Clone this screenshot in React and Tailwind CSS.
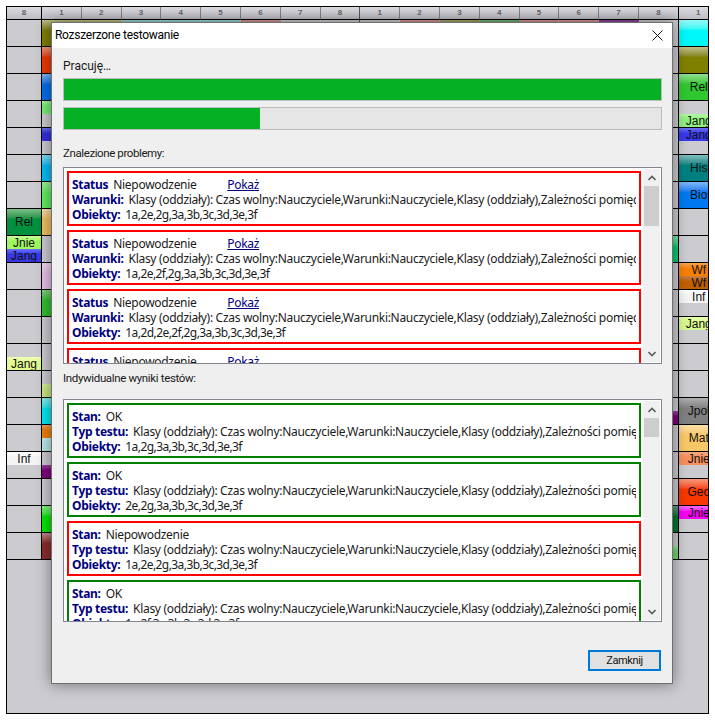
const sans = "font-['Noto_Sans',sans-serif]";
const narrow = "font-['Roboto',sans-serif]";

const olive = "from-[#c2c28a] to-[#808000]";
const teal = "from-[#a6dada] to-[#20a0a0]";
const rose = "from-[#d89a9a] to-[#c04040]";
const plum = "from-[#8a4a9a] to-[#600080]";
const sage = "from-[#78b878] to-[#208020]";
const moss = "from-[#a8a868] to-[#808000]";

const full = (bg, t) => [{ pos: "full", bg, t }];
const top = (bg, t) => ({ pos: "top", bg, t });
const bottom = (bg, t) => ({ pos: "bottom", bg, t });

const slotPos = {
  full: "h-full",
  top: "h-[13px]",
  bottom: "h-[13px] mt-auto",
};

const columns = [
  {
    head: "8",
    width: "w-[35px]",
    line: "border-r-black",
    cells: {
      7: full("from-[#7cc08c] to-[#009040]", "Rel"),
      8: [top("from-[#c8ff98] to-[#a0f860]", "Jnie"), bottom("from-[#7070f8] to-[#3838e8]", "Jang")],
      12: [bottom("from-[#f2ffb4] to-[#e0fa90]", "Jang")],
      16: [top("from-[#ffffff] to-[#f4f4f4]", "Inf")],
    },
  },
  {
    head: "1",
    cells: {
      0: full(olive),
      1: full("from-[#f09878] to-[#f03800]"),
      2: full("from-[#80b8f0] to-[#0070f0]"),
      3: [top("from-[#a0f8a0] to-[#78f078]")],
      4: [top("from-[#7070f0] to-[#3030e0]")],
      5: full("from-[#80e0f8] to-[#00c0f8]"),
      6: full("from-[#a0f0a0] to-[#60f060]"),
      7: full("from-[#f8e0b0] to-[#f0c060]"),
      9: full("from-[#f4dcf0] to-[#e8c0e8]"),
      10: full("from-[#80d080] to-[#30c030]"),
      13: [bottom("from-[#d8f0a0] to-[#c8e880]")],
      14: full("from-[#80f0f0] to-[#00e8f0]"),
      15: [top("from-[#f0a050] to-[#f08000]"), bottom("from-[#c8f0f0] to-[#b8e8e8]")],
      16: [bottom("from-[#a040a0] to-[#800080]")],
      18: full("from-[#80f880] to-[#00e800]"),
      19: full("from-[#c09090] to-[#8c2c2c]"),
    },
  },
  { head: "2", cells: { 0: full(olive) } },
  { head: "3", cells: { 0: full(teal) } },
  { head: "4", cells: { 0: full(teal) } },
  { head: "5", cells: { 0: full(teal) } },
  { head: "6", cells: { 0: full(rose) } },
  { head: "7", cells: {} },
  { head: "8", line: "border-r-[#555555]", cells: {} },
  { head: "1", cells: {} },
  { head: "2", cells: { 0: full(rose) } },
  { head: "3", cells: { 0: full(moss) } },
  { head: "4", cells: { 0: full(sage) } },
  { head: "5", cells: { 0: full(rose) } },
  { head: "6", cells: { 0: full(rose) } },
  { head: "7", cells: { 0: full(plum) } },
  {
    head: "8",
    line: "border-r-black",
    cells: {
      8: full("from-[#80e8b0] to-[#00d070]"),
      14: [bottom("from-[#a040a0] to-[#800080]")],
      18: full("from-[#60a080] to-[#007830]"),
      19: [bottom("from-[#a0e8a0] to-[#70d870]")],
    },
  },
  {
    head: "1",
    width: "w-[40px]",
    cells: {
      0: full("from-[#90f8f8] to-[#00f8f8]"),
      1: full("from-[#c2c28a] to-[#808000]"),
      2: full("from-[#90e090] to-[#30c830]", "Rel"),
      3: [bottom("from-[#b0f8a0] to-[#90f080]", "Jang")],
      4: [top("from-[#7070f8] to-[#3838f0]", "Jang")],
      5: full("from-[#80c0c0] to-[#008080]", "His"),
      6: full("from-[#80b8f8] to-[#0078f0]", "Bio"),
      9: [top("from-[#f8a850] to-[#f88000]", "Wf"), bottom("from-[#c88040] to-[#c06000]", "Wf")],
      10: [top("from-[#ffffff] to-[#f4f4f4]", "Inf")],
      11: [top("from-[#e8ffa8] to-[#d8f890]", "Jang")],
      14: full("from-[#b0b0b0] to-[#808080]", "Jpol"),
      15: full("from-[#fce0a8] to-[#f8c868]", "Mat"),
      16: [top("from-[#f8a880] to-[#f89060]", "Jnie")],
      17: full("from-[#f89878] to-[#f83800]", "Geo"),
      18: [top("from-[#f868f8] to-[#f800f8]", "Jnie")],
    },
  },
];

const rows = Array.from({ length: 20 }, (_, i) => i);

function Cell({ slots }) {
  return (
    <div className="flex h-[27px] flex-col border-b border-black">
      {slots?.map((slot) => (
        <div
          key={slot.pos}
          className={`flex items-center justify-center overflow-hidden whitespace-nowrap bg-linear-to-b to-40% text-[12px] leading-none text-[#111111] ${slotPos[slot.pos]} ${slot.bg}`}
        >
          {slot.t}
        </div>
      ))}
    </div>
  );
}

function Timetable() {
  return (
    <div className="flex h-[708px] w-[703px] overflow-hidden border border-black bg-[#cbcbd0] font-['Liberation_Sans',sans-serif]">
      {columns.map((col, i) => (
        <div key={i} className={`shrink-0 ${col.width ?? "w-[39.8px]"}`}>
          <div
            className={`flex h-[13px] items-center justify-center border-b border-r border-b-black bg-linear-to-b from-[#dcdce0] to-[#bcbcc2] text-[8px] font-bold leading-none text-[#666666] ${col.line ?? "border-r-[#808084]"}`}
          >
            {col.head}
          </div>
          <div className={col.line ? `border-r ${col.line}` : ""}>
            {rows.map((r) => (
              <Cell key={r} slots={col.cells[r]} />
            ))}
          </div>
        </div>
      ))}
    </div>
  );
}

function Chevron({ up }) {
  return (
    <svg width="8" height="6" viewBox="0 0 8 6" fill="none" stroke="#606060" strokeWidth="1.6">
      <polyline points={up ? "0.5,5 4,1.5 7.5,5" : "0.5,1 4,4.5 7.5,1"} />
    </svg>
  );
}

function Scrollbar({ thumb }) {
  return (
    <div className="my-[1px] mr-[1px] flex w-[17px] shrink-0 flex-col items-center bg-[#f0f0f0]">
      <div className="flex h-[17px] shrink-0 items-center justify-center">
        <Chevron up />
      </div>
      <div className={`w-[15px] bg-[#cdcdcd] ${thumb}`} />
      <div className="mt-auto flex h-[17px] shrink-0 items-center justify-center">
        <Chevron />
      </div>
    </div>
  );
}

function Label({ children }) {
  return <span className="mr-[5px] font-bold text-[#000080]">{children}</span>;
}

function ResultCard({ ok, first, firstValue, second, third, link }) {
  return (
    <div
      className={`h-[55px] shrink-0 overflow-hidden border-2 bg-white px-[3px] py-[4px] tracking-[-0.3px] ${sans} ${ok ? "border-[#008000]" : "border-[#ff0000]"}`}
    >
      <div className="flex h-[15px] items-center whitespace-nowrap">
        <Label>{first}</Label>
        <span className={link ? "w-[114px]" : ""}>{firstValue}</span>
        {link && <a className="text-[#000080] underline">Pokaż</a>}
      </div>
      <div className="flex h-[15px] items-center overflow-hidden whitespace-nowrap">
        <Label>{second}</Label>
        <span>Klasy (oddziały): Czas wolny:Nauczyciele,Warunki:Nauczyciele,Klasy (oddziały),Zależności pomiędzy lekcjami</span>
      </div>
      <div className="flex h-[15px] items-center whitespace-nowrap">
        <Label>Obiekty:</Label>
        <span className="tracking-[-0.57px]">{third}</span>
      </div>
    </div>
  );
}

const problems = [
  "1a,2e,2g,3a,3b,3c,3d,3e,3f",
  "1a,2e,2f,2g,3a,3b,3c,3d,3e,3f",
  "1a,2d,2e,2f,2g,3a,3b,3c,3d,3e,3f",
  "1a,2e,2g,3a,3b,3c,3d,3e,3f",
];

const results = [
  { ok: true, value: "OK", objects: "1a,2g,3a,3b,3c,3d,3e,3f" },
  { ok: true, value: "OK", objects: "2e,2g,3a,3b,3c,3d,3e,3f" },
  { ok: false, value: "Niepowodzenie", objects: "1a,2e,2g,3a,3b,3c,3d,3e,3f" },
  { ok: true, value: "OK", objects: "1a,2f,3a,3b,3c,3d,3e,3f" },
];

function ProgressBar({ fill }) {
  return (
    <div className="h-[23px] border border-[#bcbcbc] bg-[#e6e6e6]">
      <div className={`h-full bg-[#06b025] ${fill}`} />
    </div>
  );
}

function Dialog() {
  return (
    <div
      className={`absolute left-[51px] top-[22px] flex h-[662px] w-[622px] flex-col border border-[#707070] bg-[#efefef] text-[12px] leading-[15px] text-[#1a1a1a] shadow-[0_0_14px_rgba(0,0,0,0.45)] ${narrow}`}
    >
      <div className="flex h-[25px] shrink-0 items-center justify-between bg-white pl-[3px] pr-[9px] tracking-[-0.27px] text-[#000000]">
        <span>Rozszerzone testowanie</span>
        <svg width="11" height="11" viewBox="0 0 11 11" stroke="#111111" strokeWidth="1">
          <line x1="0.5" y1="0.5" x2="10.5" y2="10.5" />
          <line x1="10.5" y1="0.5" x2="0.5" y2="10.5" />
        </svg>
      </div>

      <div className="flex flex-1 flex-col pl-[11px] pr-[10px]">
        <div className="mt-[11px]">Pracuję…</div>
        <div className="mt-[4px] flex flex-col gap-[6px]">
          <ProgressBar fill="w-full" />
          <ProgressBar fill="w-[196px]" />
        </div>

        <div className="mt-[16px] text-[11.5px] tracking-[-0.4px]">Znalezione problemy:</div>
        <div className="mt-[6px] flex h-[197px] border border-[#82878f] bg-white">
          <div className="flex min-w-0 flex-1 flex-col gap-[4px] overflow-hidden pb-[1px] pl-[3px] pr-[2px] pt-[3px] text-[12px]">
            {problems.map((objects, i) => (
              <ResultCard key={i} link first="Status" firstValue="Niepowodzenie" second="Warunki:" third={objects} />
            ))}
          </div>
          <Scrollbar thumb="h-[40px]" />
        </div>

        <div className="mt-[7px] text-[11.5px] tracking-[-0.35px]">Indywidualne wyniki testów:</div>
        <div className="mt-[13px] flex h-[223px] border border-[#82878f] bg-white">
          <div className="flex min-w-0 flex-1 flex-col gap-[4px] overflow-hidden pb-[1px] pl-[3px] pr-[2px] pt-[3px]">
            {results.map((r, i) => (
              <ResultCard key={i} ok={r.ok} first="Stan:" firstValue={r.value} second="Typ testu:" third={r.objects} />
            ))}
          </div>
          <Scrollbar thumb="h-[19px]" />
        </div>

        <div className="mt-[28px] flex justify-end pr-[1px]">
          <button className="h-[21px] w-[73px] border-2 border-[#0078d7] bg-[#e1e1e1] text-[11px] leading-none tracking-[-0.4px] text-[#111111]">
            Zamknij
          </button>
        </div>
      </div>
    </div>
  );
}

export default function App() {
  return (
    <div className="relative h-[720px] w-[715px] overflow-hidden bg-white p-[6px]">
      <Timetable />
      <Dialog />
    </div>
  );
}
